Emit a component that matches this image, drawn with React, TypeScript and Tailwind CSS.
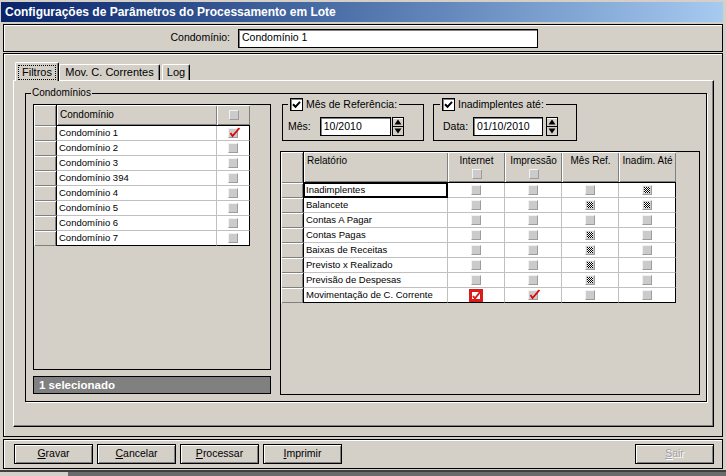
import React from "react";

type Mark = "off" | "checked" | "grayed" | "red";

const raised =
  "bg-[#d4d0c8] shadow-[inset_1px_1px_0_#fff,inset_-1px_-1px_0_#808080]";

const CONDOS = [
  "Condomínio 1",
  "Condomínio 2",
  "Condomínio 3",
  "Condomínio 394",
  "Condomínio 4",
  "Condomínio 5",
  "Condomínio 6",
  "Condomínio 7",
];

const REPORTS: { name: string; marks: Mark[] }[] = [
  { name: "Inadimplentes", marks: ["off", "off", "off", "grayed"] },
  { name: "Balancete", marks: ["off", "off", "grayed", "grayed"] },
  { name: "Contas A Pagar", marks: ["off", "off", "off", "off"] },
  { name: "Contas Pagas", marks: ["off", "off", "grayed", "off"] },
  { name: "Baixas de Receitas", marks: ["off", "off", "grayed", "off"] },
  { name: "Previsto x Realizado", marks: ["off", "off", "grayed", "off"] },
  { name: "Previsão de Despesas", marks: ["off", "off", "grayed", "off"] },
  { name: "Movimentação de C. Corrente", marks: ["red", "checked", "off", "off"] },
];

function Dither() {
  const dots = [];
  for (let y = 0; y < 6; y++)
    for (let x = 0; x < 6; x++)
      if ((x + y) % 2 === 0) dots.push(<rect key={`${x}-${y}`} x={x} y={y} width="1" height="1" fill="#000" />);
  return (
    <svg className="absolute left-[1px] top-[1px]" width="6" height="6" viewBox="0 0 6 6">
      <rect width="6" height="6" fill="#fff" />
      {dots}
    </svg>
  );
}

function GridCheck({ mark = "off" }: { mark?: Mark }) {
  if (mark === "red") {
    return (
      <svg width="14" height="13" viewBox="0 0 14 13">
        <rect width="14" height="13" fill="#d91c1c" />
        <rect x="3" y="3" width="8" height="7" fill="#fff" />
        <path d="M4 7 L6 9.5 L11 3" stroke="#d91c1c" strokeWidth="2" fill="none" />
      </svg>
    );
  }
  return (
    <span className="relative block h-[10px] w-[10px] border border-b-[#9c9c9c] border-l-[#f2f2f2] border-r-[#9c9c9c] border-t-[#f2f2f2] bg-[#cbcbcb]">
      {mark === "grayed" && <Dither />}
      {mark === "checked" && (
        <svg className="absolute -left-[1px] -top-[3px]" width="13" height="12" viewBox="0 0 13 12">
          <path d="M2.5 7 L4.5 10 L11.5 2" stroke="#e00000" strokeWidth="1.7" fill="none" />
        </svg>
      )}
    </span>
  );
}

function BigCheck() {
  return (
    <span className="flex h-[13px] w-[13px] items-center justify-center border border-black bg-white shadow-[inset_1px_1px_0_#808080]">
      <svg width="9" height="9" viewBox="0 0 9 9">
        <path d="M1 4.2 L3.5 6.8 L8 1.8" stroke="#000" strokeWidth="2" fill="none" />
      </svg>
    </span>
  );
}

function Spinner() {
  return (
    <svg width="12" height="19" viewBox="0 0 12 19">
      <rect x="0.5" y="0.5" width="11" height="18" fill="#d4d0c8" stroke="#000" />
      <line x1="1" y1="1.5" x2="11" y2="1.5" stroke="#fff" />
      <line x1="0" y1="9.5" x2="12" y2="9.5" stroke="#000" />
      <path d="M6 2.5 L9.5 7.5 L2.5 7.5 Z" fill="#000" />
      <path d="M6 16.5 L9.5 11.5 L2.5 11.5 Z" fill="#000" />
    </svg>
  );
}

function Btn({ first, rest, disabled }: { first: string; rest: string; disabled?: boolean }) {
  return (
    <div
      className={`flex h-[20px] w-[79px] items-center justify-center border border-black bg-[#d4d0c8] text-[10.5px] shadow-[inset_1px_1px_0_#fff,inset_-1px_-1px_0_#808080] ${
        disabled ? "text-[#a0a0a0] [text-shadow:1px_1px_0_#fff]" : "text-black"
      }`}
    >
      <span>
        <u>{first}</u>
        {rest}
      </span>
    </div>
  );
}

export default function App() {
  return (
    <div className="relative h-[476px] w-[726px] overflow-hidden bg-[#d4d0c8] font-['Liberation_Sans',Arial,sans-serif] text-black">
      {/* title bar */}
      <div className="ml-[1px] mr-[3px] mt-[2px] flex h-[20px] items-center bg-linear-to-r from-[#0a246a] to-[#a6caf0] pl-[4px] text-[12px] font-bold text-white">
        Configurações de Parâmetros do Processamento em Lote
      </div>

      {/* top panel */}
      <div className="mx-[3px] mt-[2px] flex h-[28px] items-center border border-black shadow-[inset_1px_1px_0_#fff]">
        <span className="w-[226px] text-right text-[10.5px]">Condomínio:</span>
        <div className="ml-[8px] flex h-[19px] w-[300px] items-center border border-black bg-white pl-[3px] text-[10.5px] shadow-[inset_1px_1px_0_#808080]">
          Condomínio 1
        </div>
      </div>

      {/* main panel */}
      <div className="mx-[3px] mt-[1px] h-[384px] border border-black pl-[9px] pt-[8px] shadow-[inset_1px_1px_0_#fff]">
        <div className="flex h-[18px] items-end pl-[2px]">
          <div className="relative z-10 -mb-[1px] flex h-[19px] w-[44px] items-center justify-center rounded-t-[2px] border-l border-r border-t border-l-white border-r-black border-t-white bg-[#d4d0c8] shadow-[inset_-1px_0_0_#808080]">
            <span className="border border-dotted border-black px-[3px] text-[11px] leading-[13px]">Filtros</span>
          </div>
          <div className="flex h-[16px] w-[101px] items-center justify-center rounded-t-[2px] border-l border-r border-t border-l-white border-r-black border-t-white text-[11px] shadow-[inset_-1px_0_0_#808080]">
            Mov. C. Correntes
          </div>
          <div className="ml-[2px] flex h-[16px] w-[28px] items-center justify-center rounded-t-[2px] border-l border-r border-t border-l-white border-r-black border-t-white text-[11px] shadow-[inset_-1px_0_0_#808080]">
            Log
          </div>
        </div>

        {/* tab page */}
        <div className="h-[347px] w-[701px] border border-b-black border-l-white border-r-black border-t-white shadow-[inset_-1px_-1px_0_#808080]">
          <fieldset className="ml-[11px] mt-[6px] w-[682px] border border-black shadow-[1px_1px_0_#fff]">
            <legend className="ml-[5px] px-[1px] text-[10px] leading-[12px]">Condomínios</legend>
            <div className="flex items-start gap-[9px] pb-[6px] pl-[7px]">
              {/* left column */}
              <div className="mt-[5px] flex w-[238px] flex-col gap-[6px]">
                <div className="h-[266px] w-[238px] border border-black bg-[#d4d0c8]">
                  <div className="flex h-[21px]">
                    <div className={`w-[22px] ${raised}`} />
                    <div className={`w-[161px] border-b border-l border-black pl-[3px] text-[10px] leading-[20px] ${raised}`}>
                      Condomínio
                    </div>
                    <div className={`flex w-[33px] items-center justify-center border-b border-black ${raised}`}>
                      <GridCheck />
                    </div>
                  </div>
                  {CONDOS.map((c, i) => {
                    const last = i === CONDOS.length - 1;
                    return (
                      <div key={c} className="flex h-[15px]">
                        <div className={`w-[22px] ${raised}`} />
                        <div
                          className={`w-[161px] border-b border-l border-r border-l-black border-r-[#c0c0c0] bg-white pl-[2px] text-[9.5px] leading-[14px] ${
                            last ? "border-b-black" : "border-b-[#c0c0c0]"
                          }`}
                        >
                          {c}
                        </div>
                        <div
                          className={`flex w-[33px] items-center justify-center border-b border-r border-r-black bg-white ${
                            last ? "border-b-black" : "border-b-[#c0c0c0]"
                          }`}
                        >
                          <GridCheck mark={i === 0 ? "checked" : "off"} />
                        </div>
                      </div>
                    );
                  })}
                </div>
                <div className="h-[18px] w-[238px] border border-black bg-[#808080] pl-[5px] text-[11.5px] font-bold leading-[16px] text-white">
                  1 selecionado
                </div>
              </div>

              {/* right column */}
              <div className="-mt-[1px] flex w-[420px] flex-col">
                <div className="flex gap-[9px] pl-[2px]">
                  <fieldset className="w-[142px] border border-black">
                    <legend className="ml-[5px] flex items-center gap-[3px] px-[2px] text-[10.5px] leading-[13px]">
                      <BigCheck />
                      <span>Mês de Referência:</span>
                    </legend>
                    <div className="flex items-center pb-[4px] pl-[5px] pt-[6px] text-[10.5px]">
                      <span>Mês:</span>
                      <div className="ml-[9px] flex h-[19px] w-[71px] items-center border border-black bg-white pl-[3px] shadow-[inset_1px_1px_0_#808080]">
                        10/2010
                      </div>
                      <span className="ml-[1px] flex">
                        <Spinner />
                      </span>
                    </div>
                  </fieldset>
                  <fieldset className="w-[144px] border border-black">
                    <legend className="ml-[6px] flex items-center gap-[3px] px-[2px] text-[10.5px] leading-[13px]">
                      <BigCheck />
                      <span>Inadimplentes até:</span>
                    </legend>
                    <div className="flex items-center pb-[4px] pl-[9px] pt-[6px] text-[10.5px]">
                      <span>Data:</span>
                      <div className="ml-[5px] flex h-[19px] w-[70px] items-center border border-black bg-white pl-[3px] shadow-[inset_1px_1px_0_#808080]">
                        01/10/2010
                      </div>
                      <span className="ml-[3px] flex">
                        <Spinner />
                      </span>
                    </div>
                  </fieldset>
                </div>

                {/* reports grid */}
                <div className="mt-[10px] h-[244px] w-[420px] border border-black bg-[#d4d0c8]">
                  <div className="flex h-[31px]">
                    <div className={`w-[22px] ${raised}`} />
                    <div className={`w-[145px] border-b border-l border-black pl-[3px] pt-[3px] text-[10px] leading-[12px] ${raised}`}>
                      Relatório
                    </div>
                    {["Internet", "Impressão", "Mês Ref.", "Inadim. Até"].map((h, i) => (
                      <div
                        key={h}
                        className={`flex w-[57px] flex-col items-center border-b border-black pt-[3px] text-[10px] leading-[12px] ${raised}`}
                      >
                        <span>{h}</span>
                        {i < 2 && (
                          <span className="mt-[2px]">
                            <GridCheck />
                          </span>
                        )}
                      </div>
                    ))}
                  </div>
                  {REPORTS.map((r, i) => {
                    const last = i === REPORTS.length - 1;
                    const bottom = last ? "border-b-black" : "border-b-[#c0c0c0]";
                    return (
                      <div key={r.name} className="flex h-[15px]">
                        <div className={`w-[22px] ${raised}`} />
                        <div
                          className={`w-[145px] border-b border-l border-r border-l-black bg-white pl-[2px] text-[9.5px] leading-[14px] ${
                            i === 0
                              ? "border-b-black border-r-black shadow-[inset_0_0_0_1px_#000]"
                              : `border-r-[#c0c0c0] ${bottom}`
                          }`}
                        >
                          {r.name}
                        </div>
                        {r.marks.map((m, j) => (
                          <div
                            key={j}
                            className={`flex w-[57px] items-center justify-center border-b border-r bg-white ${bottom} ${
                              j === 3 ? "border-r-black" : "border-r-[#c0c0c0]"
                            }`}
                          >
                            <GridCheck mark={m} />
                          </div>
                        ))}
                      </div>
                    );
                  })}
                </div>
              </div>
            </div>
          </fieldset>
        </div>
      </div>

      {/* button bar */}
      <div className="mx-[3px] mt-[2px] flex h-[30px] items-start gap-[4px] border border-black pl-[10px] pr-[8px] pt-[4px] shadow-[inset_1px_1px_0_#fff]">
        <Btn first="G" rest="ravar" />
        <Btn first="C" rest="ancelar" />
        <Btn first="P" rest="rocessar" />
        <Btn first="I" rest="mprimir" />
        <div className="ml-auto">
          <Btn first="S" rest="air" disabled />
        </div>
      </div>
      <div className="mt-[1px] h-[2px] bg-[#404040]" />
      <div className="flex h-[6px]">
        <div className="w-[68px] bg-[#d4d0c8]" />
        <div className="flex-1 bg-[#6b6b6b]" />
      </div>
    </div>
  );
}
